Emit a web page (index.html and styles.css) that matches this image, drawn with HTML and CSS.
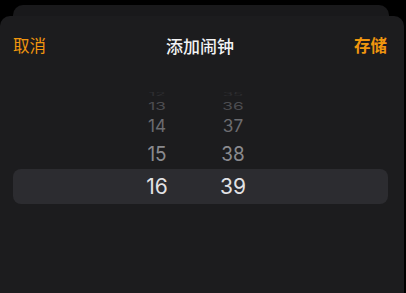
FILE: index.html
```html
<!DOCTYPE html>
<html lang="zh">
<head>
<meta charset="utf-8">
<link rel="stylesheet" href="styles.css">
</head>
<body>
<div class="back-card"></div>
<div class="sheet">
  <div class="nav">
    <span class="nav-btn cancel">取消</span>
    <span class="nav-title">添加闹钟</span>
    <span class="nav-btn save">存储</span>
  </div>
  <div class="picker">
    <div class="row r12"><span class="cell">12</span><span class="cell">35</span></div>
    <div class="row r13"><span class="cell">13</span><span class="cell">36</span></div>
    <div class="row r14"><span class="cell">14</span><span class="cell">37</span></div>
    <div class="row r15"><span class="cell">15</span><span class="cell">38</span></div>
    <div class="row r16 selected"><span class="cell">16</span><span class="cell">39</span></div>
  </div>
</div>
</body>
</html>
```

FILE: styles.css
```css
* { box-sizing: border-box; }
html, body { margin: 0; padding: 0; }
body {
  width: 406px;
  height: 293px;
  overflow: hidden;
  background: #000;
  font-family: Inter, "Noto Sans CJK SC", sans-serif;
  padding-top: 5px;
}
.back-card {
  margin: 0 17px 0 13px;
  height: 11px;
  background: #19191b;
  border-radius: 10px 10px 0 0;
}
.sheet {
  width: 404px;
  height: 277px;
  background: #1c1c1e;
  border-radius: 10px 10px 0 0;
}
.nav {
  height: 58px;
  display: flex;
  align-items: center;
  justify-content: space-between;
  padding: 0 17px 0 13px;
  font-family: "Noto Sans CJK SC", sans-serif;
}
.nav-btn {
  font-size: 16.5px;
  color: #f0960e;
  width: 60px;
}
.save { text-align: right; font-weight: 700; }
.nav-title {
  font-size: 17px;
  font-weight: 500;
  color: #f2f2f4;
}
.picker {
  padding: 15px 16px 0 13px;
  display: flex;
  flex-direction: column;
}
.row {
  display: flex;
  align-items: center;
  gap: 26px;
  padding-left: 119px;
  font-size: 21px;
}
.cell {
  width: 50px;
  text-align: center;
  line-height: 1;
}
.r12 { height: 11px; color: #2e2e31; }
.r12 .cell { transform: scale(0.8, 0.2); }
.r13 { height: 12px; color: #4c4c50; }
.r13 .cell { transform: scale(0.82, 0.52); }
.r14 { height: 26px; color: #6c6c70; }
.r14 .cell { transform: scale(0.82, 0.8); }
.r15 { height: 31px; color: #8a8a8e; }
.r15 .cell { transform: scale(0.9, 0.96); }
.r16 {
  height: 35px;
  color: #e2e2e5;
  background: #2c2c30;
  border-radius: 8px;
}
```
